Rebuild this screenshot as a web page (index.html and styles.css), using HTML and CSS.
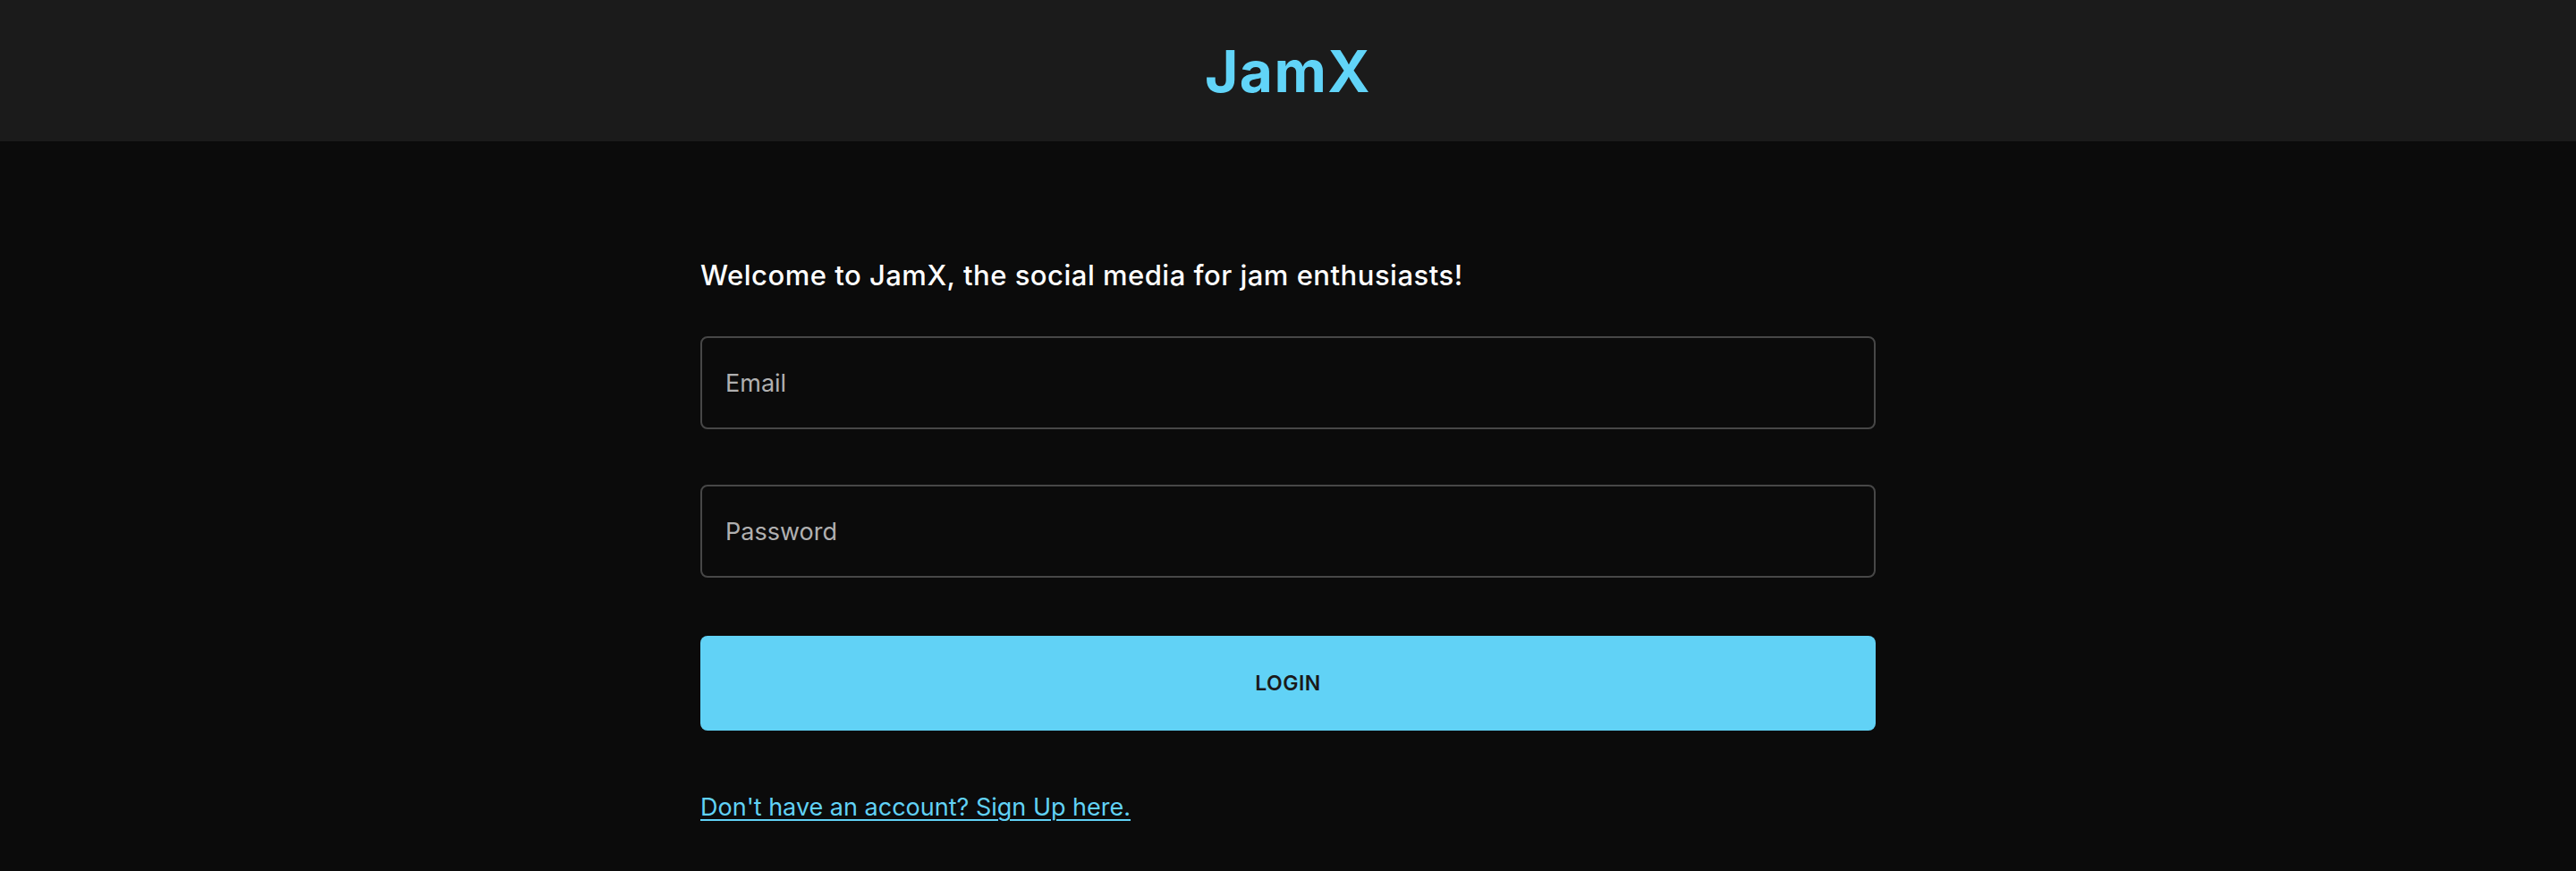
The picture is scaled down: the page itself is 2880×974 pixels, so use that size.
FILE: index.html
```html
<!DOCTYPE html>
<html lang="en">
<head>
<meta charset="utf-8">
<title>JamX</title>
<link rel="stylesheet" href="styles.css">
</head>
<body>
<header class="topbar">
  <h1 class="brand">JamX</h1>
</header>
<main class="main">
  <form class="login">
    <p class="welcome">Welcome to JamX, the social media for jam enthusiasts!</p>
    <input class="field" type="email" placeholder="Email">
    <input class="field" type="password" placeholder="Password">
    <button class="btn" type="button">LOGIN</button>
    <a class="signup" href="#">Don't have an account? Sign Up here.</a>
  </form>
</main>
</body>
</html>
```

FILE: styles.css
```css
* { box-sizing: border-box; }
html, body { margin: 0; padding: 0; }
body {
  background: #0b0b0b;
  color: #fff;
  font-family: "Inter", "Roboto", "Liberation Sans", sans-serif;
  min-height: 974px;
}
.topbar {
  height: 158px;
  background: #1b1b1b;
  display: flex;
  align-items: center;
  justify-content: center;
}
.brand {
  margin: 0;
  font-size: 64px;
  font-weight: 700;
  color: #61d4f8;
  letter-spacing: 1.5px;
}
.main {
  display: flex;
  justify-content: center;
}
.login {
  width: 1314px;
  display: flex;
  flex-direction: column;
  align-items: stretch;
  padding-top: 128px;
}
.welcome {
  margin: 0 0 46px;
  font-size: 31px;
  line-height: 44px;
  font-weight: 500;
  letter-spacing: 0.5px;
  color: #fff;
}
.field {
  height: 104px;
  border: 2px solid #474747;
  border-radius: 8px;
  background: #0b0b0b;
  color: #fff;
  padding: 0 26px;
  font-family: inherit;
  font-size: 27px;
  margin-bottom: 62px;
  outline: none;
}
.field::placeholder { color: #b0b0b0; }
.field + .field { margin-bottom: 65px; }
.btn {
  height: 106px;
  border: none;
  border-radius: 8px;
  background: #61d2f6;
  color: #1a1a1a;
  font-family: inherit;
  font-size: 23px;
  font-weight: 600;
  letter-spacing: 0.5px;
  margin-bottom: 66px;
}
.signup {
  align-self: flex-start;
  color: #61d2f6;
  font-size: 27px;
  line-height: 40px;
  text-decoration: underline;
  text-underline-offset: 4px;
  text-decoration-thickness: 2px;
}
```
